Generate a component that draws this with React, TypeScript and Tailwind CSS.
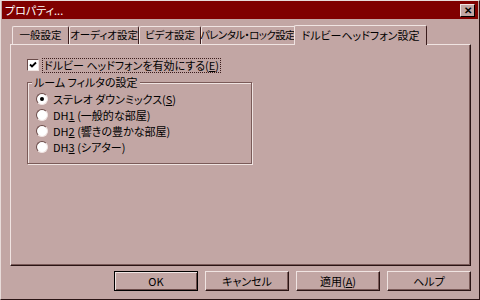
const face = "bg-[#c2a6a4]";

const Tab = ({ label, w, active }: { label: string; w: string; active?: boolean }) => (
	<div
		className={`shrink-0 whitespace-nowrap flex items-center justify-center border-t border-l border-r border-t-[#f0e4e2] border-l-[#f0e4e2] border-r-[#3a1c1c] rounded-t-[2px] ${w} ${face} ${
			active ? "h-[20px] -mx-[2px] -mb-px z-10 pb-px text-[11px]" : "h-[18px] text-[10.5px]"
		}`}
	>
		{label}
	</div>
);

const Radio = ({ checked, children }: { checked?: boolean; children: React.ReactNode }) => (
	<div className="flex items-center h-[16px] gap-[5px]">
		<span className="w-[12px] h-[12px] rounded-full bg-white border border-t-[#6a4a48] border-l-[#6a4a48] border-r-[#f0e4e2] border-b-[#f0e4e2] flex items-center justify-center">
			{checked && <span className="w-[4px] h-[4px] rounded-full bg-black" />}
		</span>
		<span>{children}</span>
	</div>
);

const Btn = ({ children, def }: { children: React.ReactNode; def?: boolean }) => (
	<div
		className={`w-[84px] h-[20px] flex items-center justify-center ${face} ${
			def
				? "border border-black shadow-[inset_1px_1px_0_#f0e4e2,inset_-1px_-1px_0_#6a4a48]"
				: "border border-t-[#f0e4e2] border-l-[#f0e4e2] border-r-[#2a1414] border-b-[#2a1414] shadow-[inset_-1px_-1px_0_#7a5a58]"
		}`}
	>
		{children}
	</div>
);

export default function App() {
	return (
		<div
			className={`w-[480px] h-[300px] ${face} flex flex-col overflow-hidden border-l border-t border-l-[#e8dcda] border-t-[#e8dcda] border-r border-b border-r-[#2a1414] border-b-[#2a1414] text-[11px] text-black [font-feature-settings:'palt'] leading-none`}
			style={{ fontFamily: '"Noto Sans CJK JP", "Noto Sans", sans-serif' }}
		>
			{/* title bar */}
			<div className="h-[18px] mx-px bg-[#800000] flex items-center justify-between pl-[3px] pr-[3px]">
				<span className="text-white text-[11px]">プロパティ...</span>
				<div className={`w-[15px] h-[13px] ${face} border border-t-[#f0e4e2] border-l-[#f0e4e2] border-r-black border-b-black flex items-center justify-center text-[10px] font-bold`}>
					✕
				</div>
			</div>

			{/* tabs */}
			<div className="flex items-end h-[25px] pl-[11px] pr-[10px]">
				<Tab w="w-[57px]" label="一般設定" />
				<Tab w="w-[70px]" label="オーディオ設定" />
				<Tab w="w-[62px]" label="ビデオ設定" />
				<Tab w="w-[95px] tracking-[-0.6px] pr-[2px]" label="パレンタル・ロック設定" />
				<Tab w="w-[133px]" label="ドルビーヘッドフォン設定" active />
			</div>

			{/* panel */}
			<div className="ml-[9px] mr-[8px] h-[222px] border border-t-[#f0e4e2] border-l-[#f0e4e2] border-r-[#2a1414] border-b-[#2a1414] shadow-[inset_-1px_-1px_0_#7a5a58] pt-[13px] pl-[16px]">
				<div className="flex items-center gap-[3px] h-[14px]">
					<span className="w-[12px] h-[12px] bg-white border border-t-[#6a4a48] border-l-[#6a4a48] border-r-[#f0e4e2] border-b-[#f0e4e2] flex items-center justify-center">
						<svg width="8" height="8" viewBox="0 0 8 8">
							<path d="M1 3.5 L3 5.5 L7 1.5" stroke="black" strokeWidth="1.8" fill="none" />
						</svg>
					</span>
					<span className="border border-dotted border-[#3a1c1c] px-px py-px">
						ドルビー ヘッドフォンを有効にする(<span className="underline">E</span>)
					</span>
				</div>

				<div className="relative mt-[10px] w-[225px] h-[82px] border border-[#7a5a58] shadow-[1px_1px_0_#f0e4e2,inset_1px_1px_0_#f0e4e2] pt-[8px] pl-[8px]">
					<span className={`absolute -top-[6px] left-[4px] px-[2px] ${face}`}>ルーム フィルタの設定</span>
					<div className="flex flex-col">
						<Radio checked>
							ステレオ ダウンミックス(<span className="underline">S</span>)
						</Radio>
						<Radio>
							DH<span className="underline">1</span> (一般的な部屋)
						</Radio>
						<Radio>
							DH<span className="underline">2</span> (響きの豊かな部屋)
						</Radio>
						<Radio>
							DH<span className="underline">3</span> (シアター)
						</Radio>
					</div>
				</div>
			</div>

			{/* buttons */}
			<div className="flex justify-end gap-[7px] mt-[5px] pr-[8px]">
				<Btn def>OK</Btn>
				<Btn>キャンセル</Btn>
				<Btn>
					適用(<span className="underline">A</span>)
				</Btn>
				<Btn>ヘルプ</Btn>
			</div>
		</div>
	);
}
